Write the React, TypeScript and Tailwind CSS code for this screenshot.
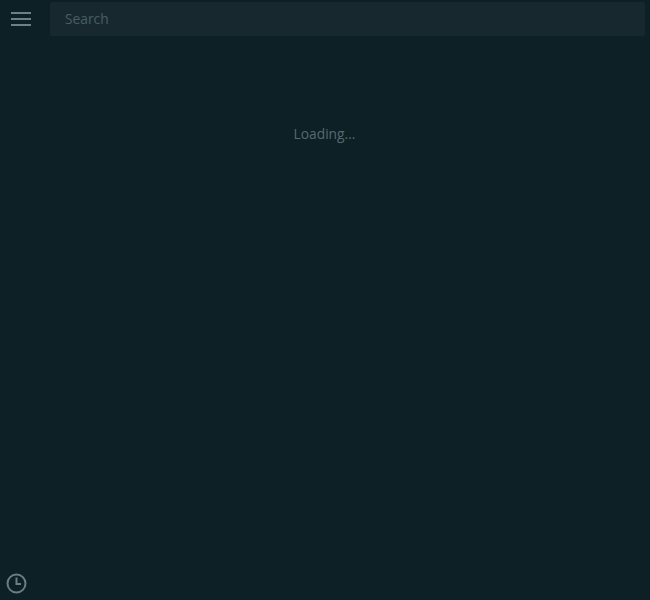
export default function App() {
  return (
    <div className="h-[600px] w-[650px] overflow-hidden bg-[#0d2025] flex flex-col font-['Open_Sans',sans-serif]">
      {/* Top bar */}
      <div className="flex items-start h-[38px] pt-[2px] pr-[5px]">
        <button className="w-[50px] h-[34px] pl-[11px] flex flex-col justify-center gap-[3.5px]">
          <span className="block w-[20px] h-[2.5px] bg-[#6f8085]" />
          <span className="block w-[20px] h-[2.5px] bg-[#6f8085]" />
          <span className="block w-[20px] h-[2.5px] bg-[#6f8085]" />
        </button>
        <div className="flex-1 h-[34px] bg-[#17292f] rounded-[2px] pl-[15px] flex items-center text-[13.8px] text-[#4a5d63]">
          Search
        </div>
      </div>

      <div className="mt-[86px] text-center text-[13.8px] leading-5 text-[#566a70] pr-[1px]">Loading...</div>

      {/* History */}
      <div className="mt-auto pl-[6px] pb-[6px]">
        <svg width="21" height="21" viewBox="0 0 21 21" fill="none" stroke="#6c7d82" strokeWidth="2" className="block">
          <circle cx="10.5" cy="10.5" r="9" />
          <path d="M10.5 4.5v6.5h4.5" />
        </svg>
      </div>
    </div>
  )
}
